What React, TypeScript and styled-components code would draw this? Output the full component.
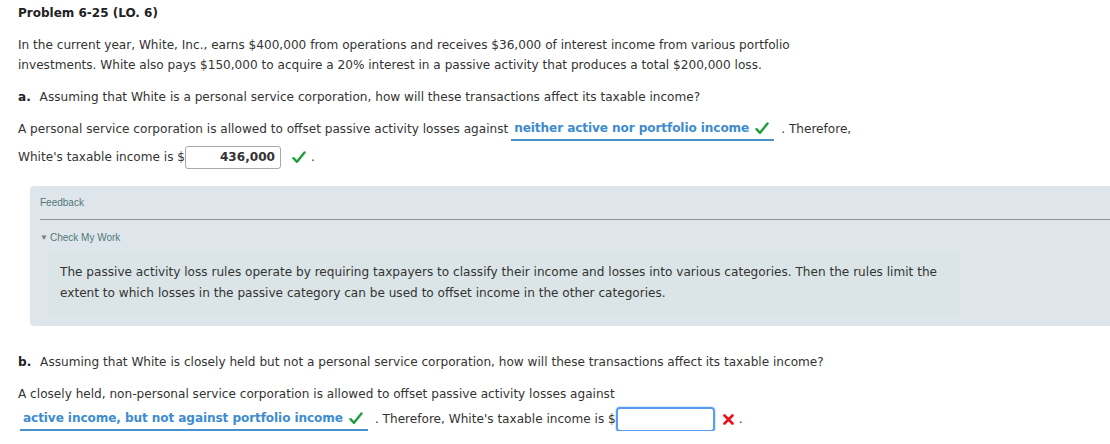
import * as React from 'react';
import styled, { createGlobalStyle } from 'styled-components';

const GlobalStyle = createGlobalStyle`
  html, body {
    margin: 0;
    padding: 0;
    background: #fff;
    overflow: hidden;
  }
  body {
    font-family: 'DejaVu Sans', Verdana, sans-serif;
    font-size: 12.1px;
    color: #333;
  }
`;

const Page = styled.div`
  width: 1110px;
  padding: 5px 0 0 18px;
  box-sizing: border-box;
`;

const Title = styled.div`
  font-weight: bold;
  font-size: 12px;
  line-height: 16px;
  color: #222;
`;

const Para = styled.p<{ $top?: number }>`
  margin: ${(p) => p.$top ?? 16}px 0 0 0;
  line-height: 20px;
`;

const PartLetter = styled.b`
  margin-right: 5px;
  color: #222;
`;

const Line = styled.div<{ $top?: number; $left?: number }>`
  display: flex;
  align-items: center;
  margin-top: ${(p) => p.$top ?? 0}px;
  margin-left: ${(p) => p.$left ?? 0}px;
  height: 24px;
  white-space: nowrap;
`;

const Dropdown = styled.span`
  display: inline-flex;
  align-items: center;
  gap: 6px;
  margin: 0 7px 0 3px;
  padding: 0 5px 0 3px;
  height: 22px;
  border-bottom: 2px solid #4a90cd;
  color: #3d8ccf;
  font-weight: bold;
  letter-spacing: -0.1px;
`;

const AnswerBox = styled.span<{ $width: number; $focused?: boolean }>`
  display: inline-flex;
  align-items: center;
  justify-content: flex-end;
  box-sizing: border-box;
  width: ${(p) => p.$width}px;
  height: ${(p) => (p.$focused ? 25 : 23)}px;
  padding: 0 5px;
  border: ${(p) => (p.$focused ? '2px solid #5a9cf0' : '1px solid #a8a8a8')};
  border-radius: ${(p) => (p.$focused ? 4 : 3)}px;
  box-shadow: ${(p) => (p.$focused ? '0 0 2px #7fb2f5' : 'none')};
  font-weight: bold;
  color: #333;
`;

const Mark = styled.span<{ $gap: number }>`
  display: inline-flex;
  align-items: center;
  margin-left: ${(p) => p.$gap}px;
  margin-right: 5px;
`;

const Panel = styled.div`
  margin: 17px -30px 0 12px;
  padding: 11px 0 10px 10px;
  background: #dfe6eb;
  border-radius: 4px;
  font-family: 'Liberation Sans', Arial, sans-serif;
`;

const PanelLabel = styled.div`
  font-size: 10px;
  line-height: 12px;
  color: #527676;
`;

const Divider = styled.div`
  margin-top: 10px;
  height: 1px;
  background: #8f9696;
`;

const Toggle = styled.div`
  margin-top: 12px;
  display: flex;
  align-items: center;
  gap: 2px;
  font-size: 10px;
  line-height: 12px;
  color: #527676;
`;

const Caret = styled.span`
  font-size: 8px;
  color: #7a7a7a;
`;

const Explanation = styled.div`
  margin: 8px 0 0 8px;
  width: 912px;
  box-sizing: border-box;
  padding: 10px 12px 12px 12px;
  background: #dbe5e7;
  font-family: 'DejaVu Sans', Verdana, sans-serif;
  font-size: 12.1px;
  line-height: 21px;
  color: #333;
`;

const Check = () => (
  <svg width="14" height="13" viewBox="0 0 14 13">
    <path d="M1.5 7.2 L5 10.8 L12.5 1.5" fill="none" stroke="#1e9e3c" strokeWidth="2.4" strokeLinecap="round" strokeLinejoin="round" />
  </svg>
);

const Cross = () => (
  <svg width="11" height="11" viewBox="0 0 11 11">
    <path d="M1.5 1.5 L9.5 9.5 M9.5 1.5 L1.5 9.5" fill="none" stroke="#e8141c" strokeWidth="2.6" strokeLinecap="round" />
  </svg>
);

export default function App() {
  return (
    <Page>
      <GlobalStyle />
      <Title>Problem 6-25 (LO. 6)</Title>
      <Para $top={14}>
        In the current year, White, Inc., earns $400,000 from operations and receives $36,000 of interest income from various portfolio
        <br />
        investments. White also pays $150,000 to acquire a 20% interest in a passive activity that produces a total $200,000 loss.
      </Para>
      <Para $top={12}>
        <PartLetter>a.</PartLetter> Assuming that White is a personal service corporation, how will these transactions affect its taxable income?
      </Para>
      <Line $top={10}>
        A personal service corporation is allowed to offset passive activity losses against
        <Dropdown>
          neither active nor portfolio income <Check />
        </Dropdown>
        . Therefore,
      </Line>
      <Line $top={4}>
        White's taxable income is $
        <AnswerBox $width={96}>436,000</AnswerBox>
        <Mark $gap={11}>
          <Check />
        </Mark>
        .
      </Line>
      <Panel>
        <PanelLabel>Feedback</PanelLabel>
        <Divider />
        <Toggle>
          <Caret>▼</Caret>Check My Work
        </Toggle>
        <Explanation>
          The passive activity loss rules operate by requiring taxpayers to classify their income and losses into various categories. Then the rules limit the
          <br />
          extent to which losses in the passive category can be used to offset income in the other categories.
        </Explanation>
      </Panel>
      <Para $top={26}>
        <PartLetter>b.</PartLetter> Assuming that White is closely held but not a personal service corporation, how will these transactions affect its taxable income?
      </Para>
      <Para $top={12}>A closely held, non-personal service corporation is allowed to offset passive activity losses against</Para>
      <Line $top={3} $left={-1}>
        <Dropdown>
          active income, but not against portfolio income <Check />
        </Dropdown>
        . Therefore, White's taxable income is $
        <AnswerBox $width={99} $focused />
        <Mark $gap={8}>
          <Cross />
        </Mark>
        .
      </Line>
    </Page>
  );
}
